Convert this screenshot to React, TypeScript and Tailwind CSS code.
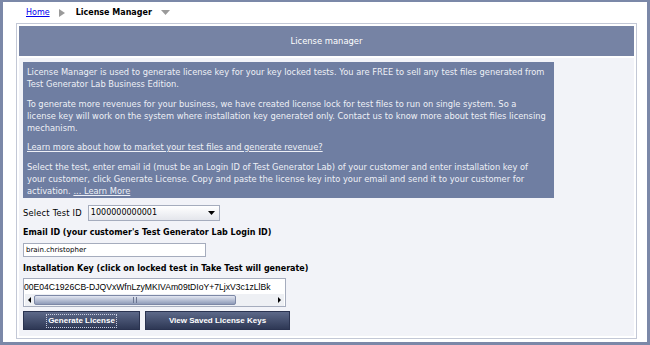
import React from 'react';

const Crumbs: React.FC = () => (
  <div className="h-[21px] flex items-center pl-[23px] text-[8px] font-['DejaVu_Sans',sans-serif]">
    <a href="#" className="text-[#0000ee] underline">Home</a>
    <svg width="6" height="8" viewBox="0 0 6 8" className="ml-[9px]">
      <path d="M0 0 L6 4 L0 8 Z" fill="#9a9a9a" />
    </svg>
    <span className="ml-[11px] font-bold text-black">License Manager</span>
    <svg width="9" height="6" viewBox="0 0 9 6" className="ml-[9px]">
      <path d="M0 0 L9 0 L4.5 5 Z" fill="#9a9a9a" />
    </svg>
  </div>
);

const App: React.FC = () => {
  return (
    <div className="w-[650px] h-[345px] overflow-hidden bg-white border-[#7b88a8] border-t-2 border-l-[3px] border-r-[3px] border-b-[3px] font-['DejaVu_Sans',sans-serif]">
      <Crumbs />
      <div className="ml-[13px] w-[621px] h-[316px] border border-[#c3c8d6] p-[2px] flex flex-col">
        <div className="h-[30px] bg-[#7683a4] flex items-center justify-center text-white text-[8.4px]">
          License manager
        </div>
        <div className="flex-1 mt-[2px] bg-[#f2f3f8] px-[4px] pt-[4px] text-[8.3px] leading-[12px] text-black">
          <div className="w-[531px] bg-[#6f7ea2] text-[#eef0f6] px-[4px] pt-[4px] pb-[1px] whitespace-nowrap">
            <p>
              License Manager is used to generate license key for your key locked tests. You are FREE to sell any test files generated from
              <br />
              Test Generator Lab Business Edition.
            </p>
            <p className="mt-[8px]">
              To generate more revenues for your business, we have created license lock for test files to run on single system. So a
              <br />
              license key will work on the system where installation key generated only. Contact us to know more about test files licensing
              <br />
              mechanism.
            </p>
            <p className="mt-[7px]">
              <a href="#" className="underline">Learn more about how to market your test files and generate revenue?</a>
            </p>
            <p className="mt-[8px]">
              Select the test, enter email id (must be an Login ID of Test Generator Lab) of your customer and enter installation key of
              <br />
              your customer, click Generate License. Copy and paste the license key into your email and send it to your customer for
              <br />
              activation. <a href="#" className="underline">... Learn More</a>
            </p>
          </div>

          <div className="mt-[7px] flex items-center">
            <span className="tracking-[0.2px]">Select Test ID</span>
            <div className="ml-[6px] w-[132px] h-[16px] border border-[#a5acbd] bg-gradient-to-b from-white to-[#e4e6ec] flex items-center justify-between pl-[2px] pr-[4px] text-[8px]">
              <span>1000000000001</span>
              <svg width="7" height="5" viewBox="0 0 7 5">
                <path d="M0 0 L7 0 L3.5 4 Z" fill="#000" />
              </svg>
            </div>
          </div>

          <div className="mt-[6px] font-bold text-[8px]">Email ID (your customer's Test Generator Lab Login ID)</div>
          <div className="mt-[4px] w-[183px] h-[14px] border border-[#a5acbd] bg-white flex items-center pl-[2px] text-[7px]">
            brain.christopher
          </div>

          <div className="mt-[6px] font-bold text-[8px]">Installation Key (click on locked test in Take Test will generate)</div>
          <div className="mt-[3px] w-[263px] h-[29px] border border-[#a5acbd] bg-white flex flex-col overflow-hidden">
            <div className="h-[15px] flex items-center whitespace-nowrap overflow-hidden text-[8.6px] font-['Liberation_Sans',sans-serif]">
              00E04C1926CB-DJQVxWfnLzyMKIVAm09tDIoY+7LjxV3c1zLlBk
            </div>
            <div className="h-[12px] mx-[1px] bg-[#eef0f4] flex items-center">
              <div className="w-[9px] h-full flex items-center justify-center">
                <svg width="3" height="6" viewBox="0 0 3 6"><path d="M3 0 L0 3 L3 6 Z" fill="#000" /></svg>
              </div>
              <div className="w-[202px] h-[10px] rounded-[2px] border border-[#7d88a6] bg-gradient-to-b from-[#e4e8f2] to-[#8f9bb8] flex items-center justify-center">
                <div className="w-[4px] h-[6px] border-x border-[#6b7591]" />
              </div>
              <div className="flex-1" />
              <div className="w-[9px] h-full flex items-center justify-center">
                <svg width="3" height="6" viewBox="0 0 3 6"><path d="M0 0 L3 3 L0 6 Z" fill="#000" /></svg>
              </div>
            </div>
          </div>

          <div className="mt-[4px] flex gap-[5px] font-['Liberation_Sans',sans-serif] text-[8px] font-bold text-white">
            <button type="button" className="w-[117px] h-[19px] bg-gradient-to-b from-[#5d6989] to-[#2e3855] border border-[#2a3350] flex items-center justify-center">
              <span className="outline outline-1 outline-dotted outline-[#c8cde0] px-[1px]">Generate License</span>
            </button>
            <button type="button" className="w-[145px] h-[19px] bg-gradient-to-b from-[#5d6989] to-[#2e3855] border border-[#2a3350] flex items-center justify-center">
              View Saved License Keys
            </button>
          </div>
        </div>
      </div>
    </div>
  );
};

export default App;
